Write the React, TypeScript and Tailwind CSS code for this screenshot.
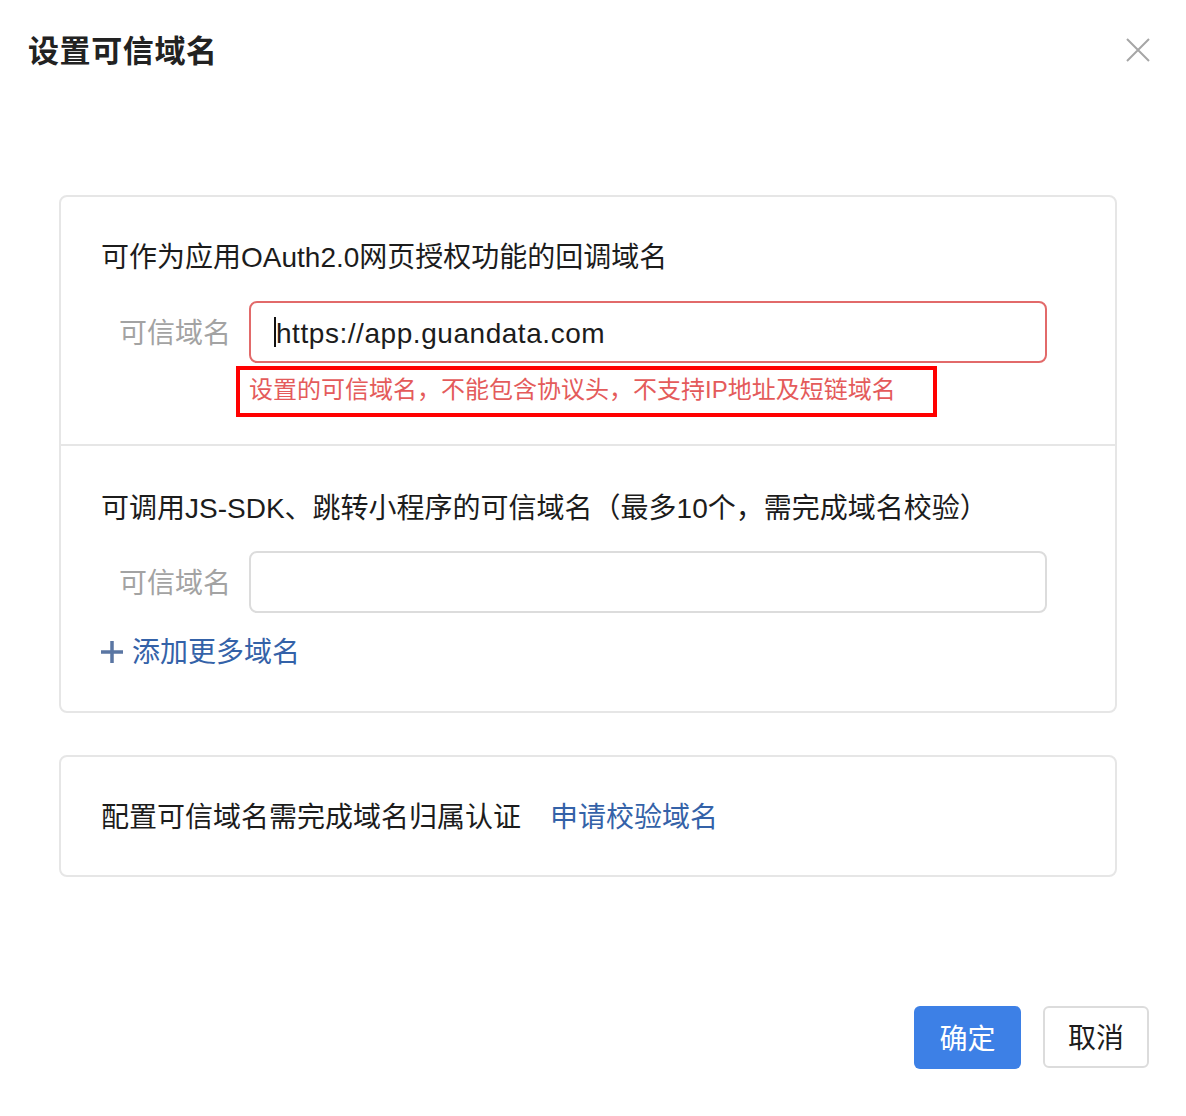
import React from 'react';

const FONT = { fontFamily: '"Liberation Sans", "Noto Sans CJK SC", sans-serif' };

const FieldRow = ({ value, error }: { value?: string; error?: boolean }) => (
  <div className="flex items-center">
    <div className="w-[130px] pt-[4px] text-right text-[28px] leading-[40px] text-[#a3a3a3]">可信域名</div>
    <div
      className={`ml-[18px] flex h-[62px] w-[798px] items-center rounded-[8px] border-2 px-[23px] ${
        error ? 'border-[#e26a6a]' : 'border-[#dcdcdc]'
      }`}
    >
      {value && (
        <>
          <span className="h-[30px] w-[2px] bg-[#111]" />
          <span className="pt-[4px] text-[28px] leading-[40px] tracking-[0.55px] text-[#1c1c1c]">{value}</span>
        </>
      )}
    </div>
  </div>
);

export default function App() {
  return (
    <div className="relative h-[1116px] w-[1186px] bg-white" style={FONT}>
      {/* header */}
      <div className="flex items-start justify-between pl-[28px] pr-[36px] pt-[32px]">
        <h1 className="text-[31px] font-bold leading-[40px] tracking-[0.6px] text-[#222]">设置可信域名</h1>
        <svg width="24" height="24" viewBox="0 0 24 24" className="mt-[6px]">
          <path d="M1 1 L23 23 M23 1 L1 23" stroke="#a6a6a6" strokeWidth="2" />
        </svg>
      </div>

      {/* card 1 */}
      <div className="ml-[59px] mt-[123px] w-[1058px] rounded-[8px] border-2 border-[#e6e6e6]">
        <div className="px-[40px] pb-[27px] pt-[41px]">
          <div className="text-[28px] leading-[40px] text-[#1c1c1c]">可作为应用OAuth2.0网页授权功能的回调域名</div>
          <div className="mt-[23px]">
            <FieldRow value="https://app.guandata.com" error />
          </div>
          <div className="ml-[135px] mt-[3px] flex h-[51px] w-[701px] items-center border-4 border-[#ff0000] pb-[3px] pl-[9px]">
            <span className="text-[24px] leading-[32px] text-[#e45b5b]">
              设置的可信域名，不能包含协议头，不支持IP地址及短链域名
            </span>
          </div>
        </div>
        <div className="h-[2px] bg-[#e6e6e6]" />
        <div className="px-[40px] pb-[38px] pt-[43px]">
          <div className="text-[28px] leading-[40px] text-[#1c1c1c]">
            可调用JS-SDK、跳转小程序的可信域名（最多10个，需完成域名校验）
          </div>
          <div className="mt-[22px]">
            <FieldRow />
          </div>
          <div className="mt-[18px] flex items-center text-[#3462a8]">
            <svg width="24" height="24" viewBox="0 0 24 24" className="ml-[-1px]">
              <path d="M12 1 V23 M1 12 H23" stroke="#5a76a3" strokeWidth="3.5" />
            </svg>
            <span className="ml-[8px] pt-[2px] text-[28px] leading-[40px]">添加更多域名</span>
          </div>
        </div>
      </div>

      {/* card 2 */}
      <div className="ml-[59px] mt-[42px] w-[1058px] rounded-[8px] border-2 border-[#e6e6e6] px-[40px] pb-[37px] pt-[41px]">
        <div className="flex items-center text-[28px] leading-[40px]">
          <span className="text-[#1c1c1c]">配置可信域名需完成域名归属认证</span>
          <span className="ml-[29px] text-[#3462a8]">申请校验域名</span>
        </div>
      </div>

      {/* footer */}
      <div className="mt-[129px] flex justify-end gap-[22px] pr-[37px]">
        <button className="h-[63px] w-[107px] rounded-[6px] bg-[#3d80e6] pt-[4px] text-[28px] text-white">确定</button>
        <button className="h-[62px] w-[106px] rounded-[6px] border-2 border-[#dcdcdc] bg-white pt-[4px] text-[28px] text-[#1c1c1c]">
          取消
        </button>
      </div>
    </div>
  );
}
